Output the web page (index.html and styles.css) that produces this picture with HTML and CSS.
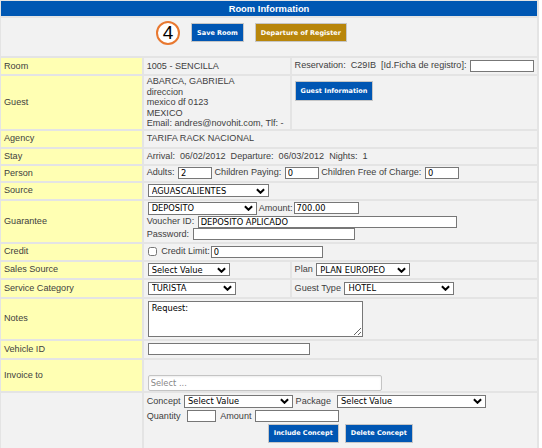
FILE: index.html
```html
<!DOCTYPE html>
<html>
<head>
  <meta charset="utf-8">
  <title>Room Information</title>
  <link rel="stylesheet" href="styles.css">
</head>
<body>
<table class="room-info">
  <tr class="r-title">
    <th colspan="3">Room Information</th>
  </tr>
  <tr class="r-actions">
    <td colspan="3">
      <div class="actions">
        <span class="step">4</span>
        <button class="btn">Save Room</button>
        <button class="btn btn-gold">Departure of Register</button>
      </div>
    </td>
  </tr>
  <tr class="r-16">
    <td class="label">Room</td>
    <td class="mid">1005 - SENCILLA</td>
    <td>Reservation:&nbsp; C29IB&nbsp; [Id.Ficha de registro]: <input type="text" class="f-ficha"></td>
  </tr>
  <tr class="r-guest">
    <td class="label">Guest</td>
    <td class="guest-data">
      ABARCA, GABRIELA<br>
      direccion<br>
      mexico df 0123<br>
      MEXICO<br>
      Email: andres@novohit.com, Tlf: -
    </td>
    <td class="guest-btn"><button class="btn btn-tall">Guest Information</button></td>
  </tr>
  <tr class="r-16">
    <td class="label">Agency</td>
    <td colspan="2">TARIFA RACK NACIONAL</td>
  </tr>
  <tr class="r-15">
    <td class="label">Stay</td>
    <td colspan="2">Arrival:&nbsp; 06/02/2012&nbsp; Departure:&nbsp; 06/03/2012&nbsp; Nights:&nbsp; 1</td>
  </tr>
  <tr class="r-15">
    <td class="label">Person</td>
    <td colspan="2">
      Adults: <input type="text" class="f-num" value="2">
      Children Paying: <input type="text" class="f-num" value="0">
      Children Free of Charge: <input type="text" class="f-num" value="0">
    </td>
  </tr>
  <tr class="r-16">
    <td class="label">Source</td>
    <td colspan="2">
      <select class="f-source"><option>AGUASCALIENTES</option></select>
    </td>
  </tr>
  <tr class="r-guarantee">
    <td class="label">Guarantee</td>
    <td colspan="2" class="stack">
      <div><select class="f-guarantee"><option>DEPOSITO</option></select> Amount:<input type="text" class="f-amount" value="700.00"></div>
      <div>Voucher ID: <input type="text" class="f-voucher" value="DEPOSITO APLICADO"></div>
      <div>Password: <input type="password" class="f-password"></div>
    </td>
  </tr>
  <tr class="r-16">
    <td class="label">Credit</td>
    <td colspan="2"><input type="checkbox" class="check"> Credit Limit:<input type="text" class="f-credit" value="0"></td>
  </tr>
  <tr class="r-16">
    <td class="label">Sales Source</td>
    <td><select class="f-sales"><option>Select Value</option></select></td>
    <td>Plan <select class="f-plan"><option>PLAN EUROPEO</option></select></td>
  </tr>
  <tr class="r-17">
    <td class="label">Service Category</td>
    <td><select class="f-service"><option>TURISTA</option></select></td>
    <td>Guest Type <select class="f-type"><option>HOTEL</option></select></td>
  </tr>
  <tr class="r-notes">
    <td class="label">Notes</td>
    <td colspan="2"><textarea class="f-notes">Request:</textarea></td>
  </tr>
  <tr class="r-17">
    <td class="label">Vehicle ID</td>
    <td colspan="2"><input type="text" class="f-vehicle"></td>
  </tr>
  <tr class="r-invoice">
    <td class="label">Invoice to</td>
    <td colspan="2" class="invoice"><input type="text" class="f-invoice" placeholder="Select ..."></td>
  </tr>
  <tr class="r-concepts">
    <td></td>
    <td colspan="2" class="concepts">
      <div class="line">
        Concept <select class="f-concept"><option>Select Value</option></select>
        Package&nbsp; <select class="f-package"><option>Select Value</option></select>
      </div>
      <div class="line">
        Quantity&nbsp; <input type="text" class="f-qty">&nbsp; Amount <input type="text" class="f-amount2">
      </div>
      <div class="concept-btns">
        <button class="btn">Include Concept</button>
        <button class="btn">Delete Concept</button>
      </div>
    </td>
  </tr>
</table>
</body>
</html>
```

FILE: styles.css
```css
/* base */
body {
  margin: 0;
  background: #fff;
  font-family: "Liberation Sans", Arial, sans-serif;
  font-size: 9.1px;
  color: #3e3e3e;
}

.room-info {
  width: 540px;
  margin: -1px 0 0 -1px;
  border-spacing: 2px;
  background: #e4e4e4;
}
.room-info th {
  height: 15px;
  padding: 0;
  background: #0057b3;
  color: #fff;
  font-size: 9.4px;
  font-weight: bold;
  text-align: center;
}
.room-info td {
  padding: 0 3px;
  background: #f2f2f2;
  line-height: 11px;
  vertical-align: middle;
  white-space: nowrap;
}
.room-info td.label {
  width: 136px;
  background: #ffffb3;
}
.room-info td.mid {
  width: 140px;
}

/* row heights */
.r-15 td { height: 15px; }
.r-16 td { height: 16px; }
.r-17 td { height: 17px; }
.r-actions td { height: 38px; vertical-align: top; }
.r-guest td { height: 52px; }
.r-guarantee td { height: 41px; }
.r-notes td { height: 40px; }
.r-invoice td { height: 30px; }
.r-concepts td { height: 58px; vertical-align: top; }

/* top buttons */
.actions {
  position: relative;
  display: flex;
  justify-content: center;
  gap: 11px;
  margin-top: 5px;
}
.step {
  position: absolute;
  top: -2px;
  left: 152px;
  width: 20px;
  height: 20px;
  border: 2px solid #e87830;
  border-radius: 50%;
  background: #fff;
  color: #000;
  font-size: 19px;
  line-height: 20px;
  text-align: center;
}

.btn {
  height: 19px;
  margin: 0;
  padding: 0 5px;
  border: 1px solid #c6c6c6;
  background: #0056b3;
  color: #fff;
  font-family: "DejaVu Sans", Verdana, sans-serif;
  font-size: 6.5px;
  font-weight: bold;
  cursor: pointer;
}
.btn-gold {
  background: #b8860b;
}
.btn-tall {
  height: 20px;
  margin-top: 5px;
}

.guest-data {
  line-height: 10.5px !important;
}
.room-info td.guest-btn {
  vertical-align: top;
}

/* fields */
input[type=text],
input[type=password],
select,
textarea {
  box-sizing: border-box;
  height: 12px;
  margin: 0 0 0 1px;
  padding: 0 2px;
  border: 1px solid #777;
  border-radius: 0;
  background: #fff;
  color: #000;
  font-family: "DejaVu Sans", Verdana, sans-serif;
  font-size: 8.3px;
  vertical-align: middle;
  outline: none;
}
select {
  -webkit-appearance: none;
  appearance: none;
  height: 13px;
  padding: 0 14px 0 3px;
  background: #fff url("data:image/svg+xml,%3Csvg xmlns='http://www.w3.org/2000/svg' viewBox='0 0 10 6'%3E%3Cpath d='M1 1l4 4 4-4' fill='none' stroke='%23000' stroke-width='2.2'/%3E%3C/svg%3E") no-repeat right 3px center;
  background-size: 9px 6px;
}
textarea {
  width: 215px;
  height: 36px;
  padding: 1px 3px;
  resize: both;
}
.check {
  width: 9px;
  height: 9px;
  margin: 0 2px 0 1px;
  vertical-align: middle;
}

.f-ficha { width: 64px; }
.f-num { width: 34px; }
.f-source { width: 121px; }
.f-guarantee { width: 109px; }
.f-amount { width: 65px; }
.f-voucher { width: 259px; }
.f-password { width: 162px; }
.f-credit { width: 112px; }
.f-sales { width: 82px; }
.f-plan { width: 94px; }
.f-service { width: 88px; }
.f-type { width: 110px; }
.f-vehicle { width: 162px; }
.f-concept { width: 109px; }
.f-package { width: 149px; }
.f-qty { width: 29px; }
.f-amount2 { width: 84px; }

.stack {
  line-height: 12.5px !important;
}

.room-info td.invoice {
  vertical-align: top;
}
.f-invoice {
  width: 234px;
  height: 16px !important;
  margin-top: 15px !important;
  border: 1px solid #c4c4c4 !important;
  border-radius: 2px !important;
  box-shadow: inset 0 1px 2px rgba(0,0,0,0.08);
}
.f-invoice::placeholder {
  color: #888;
}

.concepts .line {
  height: 15px;
  line-height: 15px;
}
.concepts .line:first-child {
  margin-top: 1px;
}
.concept-btns {
  display: flex;
  justify-content: center;
  gap: 6px;
  margin-top: 0;
}
```
